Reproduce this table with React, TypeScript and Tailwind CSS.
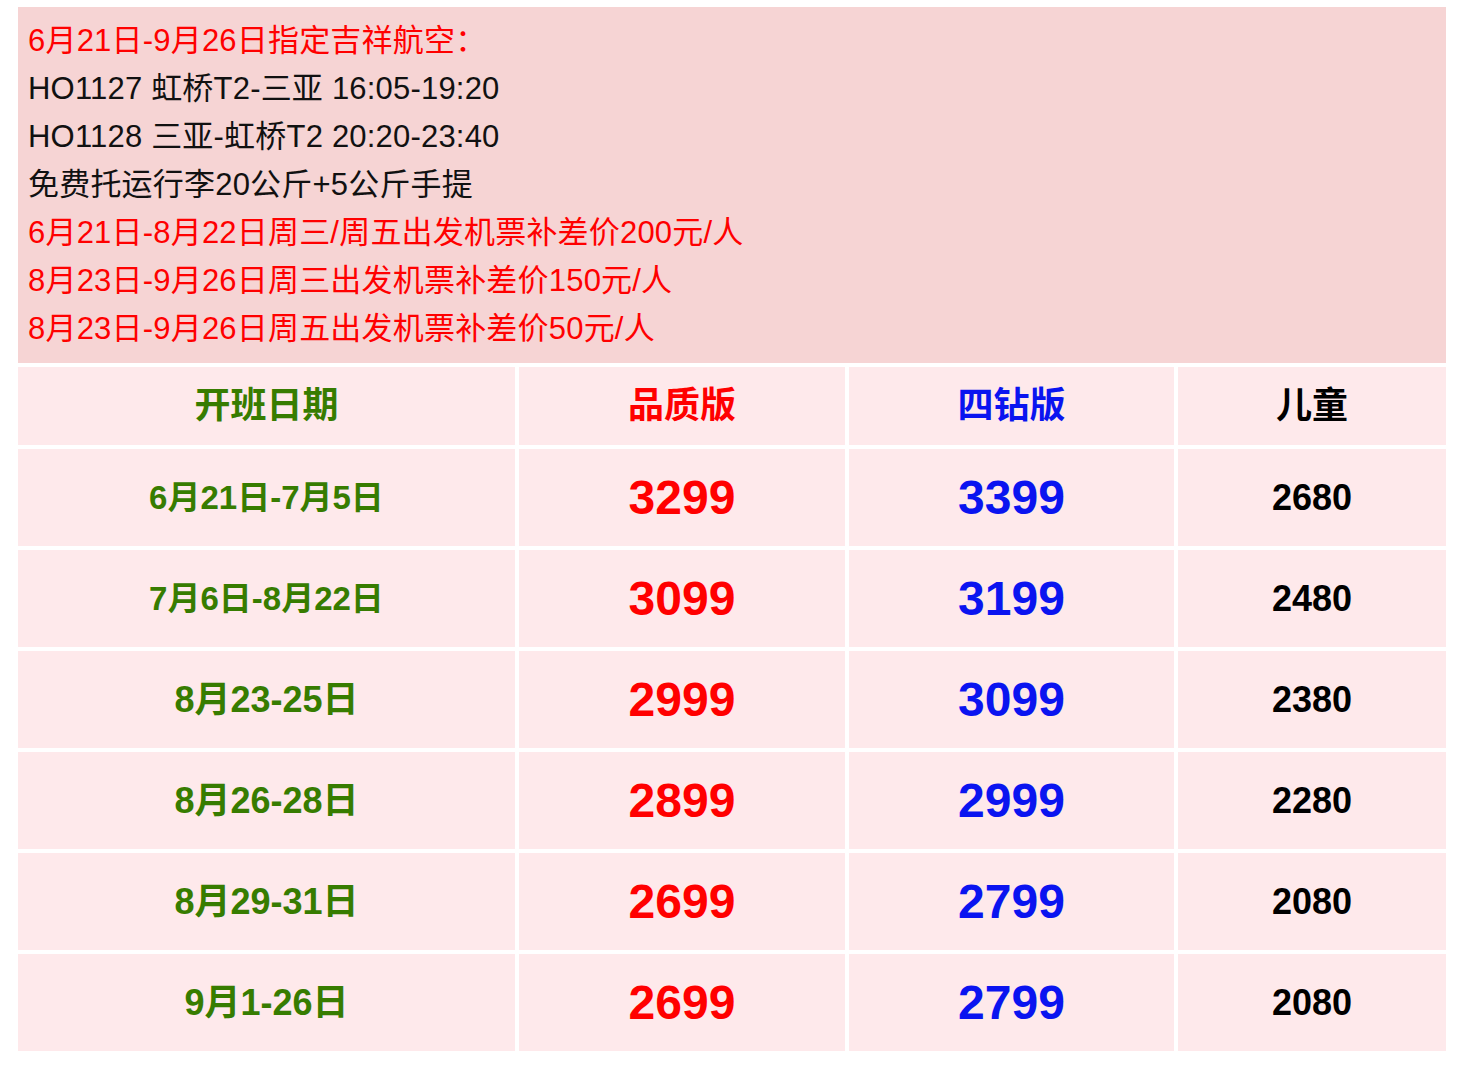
const font = { fontFamily: '"Liberation Sans", "Noto Sans CJK SC", sans-serif' }

type Row = { date: string; small: boolean; quality: string; diamond: string; child: string }

const notes: { text: string; red: boolean }[] = [
  { text: '6月21日-9月26日指定吉祥航空：', red: true },
  { text: 'HO1127 虹桥T2-三亚 16:05-19:20', red: false },
  { text: 'HO1128 三亚-虹桥T2 20:20-23:40', red: false },
  { text: '免费托运行李20公斤+5公斤手提', red: false },
  { text: '6月21日-8月22日周三/周五出发机票补差价200元/人', red: true },
  { text: '8月23日-9月26日周三出发机票补差价150元/人', red: true },
  { text: '8月23日-9月26日周五出发机票补差价50元/人', red: true },
]

const rows: Row[] = [
  { date: '6月21日-7月5日', small: true, quality: '3299', diamond: '3399', child: '2680' },
  { date: '7月6日-8月22日', small: true, quality: '3099', diamond: '3199', child: '2480' },
  { date: '8月23-25日', small: false, quality: '2999', diamond: '3099', child: '2380' },
  { date: '8月26-28日', small: false, quality: '2899', diamond: '2999', child: '2280' },
  { date: '8月29-31日', small: false, quality: '2699', diamond: '2799', child: '2080' },
  { date: '9月1-26日', small: false, quality: '2699', diamond: '2799', child: '2080' },
]

const cell = 'flex items-center justify-center bg-[#fee9eb] font-bold'

export default function App() {
  return (
    <div className="min-h-screen bg-white pt-[7px] pl-[18px]" style={font}>
      <div className="w-[1428px]">
        <div className="bg-[#f6d4d4] px-[10px] py-[10px]">
          {notes.map((n) => (
            <div
              key={n.text}
              className={`text-[31px] leading-[48px] tracking-[0.2px] whitespace-nowrap ${n.red ? 'text-[#ff0000]' : 'text-[#111111]'}`}
            >
              {n.text}
            </div>
          ))}
        </div>

        <div className="mt-[4px] grid grid-cols-[497px_326px_325px_268px] auto-rows-[97px] grid-rows-[78px] gap-[4px]">
          <div className={`${cell} text-[36px] text-[#377c00]`}>开班日期</div>
          <div className={`${cell} text-[36px] text-[#ff0000]`}>品质版</div>
          <div className={`${cell} text-[36px] text-[#0a14f0]`}>四钻版</div>
          <div className={`${cell} text-[36px] text-[#000000]`}>儿童</div>

          {rows.map((r) => (
            <>
              <div
                key={r.date + 'd'}
                className={`${cell} ${r.small ? 'text-[33px]' : 'text-[36px]'} text-[#377c00]`}
              >
                {r.date}
              </div>
              <div key={r.date + 'q'} className={`${cell} text-[48px] text-[#ff0000]`}>
                {r.quality}
              </div>
              <div key={r.date + 's'} className={`${cell} text-[48px] text-[#0a14f0]`}>
                {r.diamond}
              </div>
              <div key={r.date + 'c'} className={`${cell} text-[36px] text-[#000000]`}>
                {r.child}
              </div>
            </>
          ))}
        </div>
      </div>
    </div>
  )
}
